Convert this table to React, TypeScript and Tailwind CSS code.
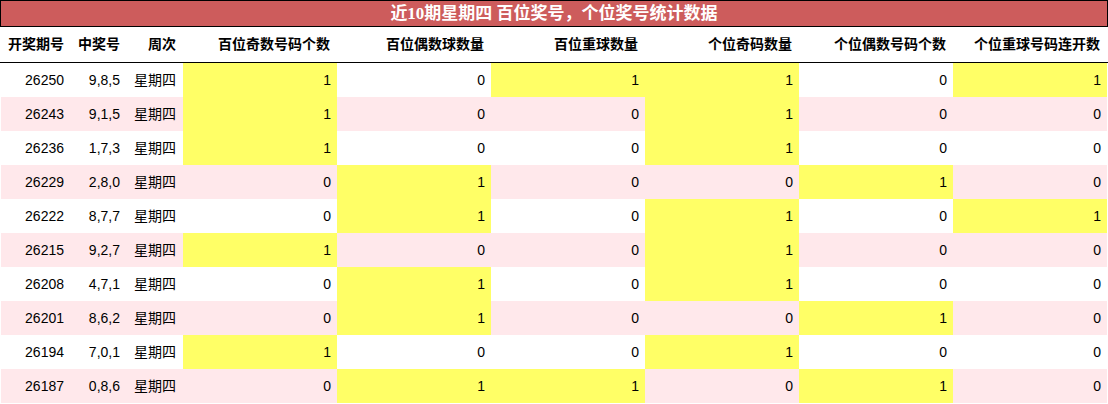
const headers = [
  "开奖期号",
  "中奖号",
  "周次",
  "百位奇数号码个数",
  "百位偶数球数量",
  "百位重球数量",
  "个位奇码数量",
  "个位偶数号码个数",
  "个位重球号码连开数",
];

const rows: [string, string, number[]][] = [
  ["26250", "9,8,5", [1, 0, 1, 1, 0, 1]],
  ["26243", "9,1,5", [1, 0, 0, 1, 0, 0]],
  ["26236", "1,7,3", [1, 0, 0, 1, 0, 0]],
  ["26229", "2,8,0", [0, 1, 0, 0, 1, 0]],
  ["26222", "8,7,7", [0, 1, 0, 1, 0, 1]],
  ["26215", "9,2,7", [1, 0, 0, 1, 0, 0]],
  ["26208", "4,7,1", [0, 1, 0, 1, 0, 0]],
  ["26201", "8,6,2", [0, 1, 0, 0, 1, 0]],
  ["26194", "7,0,1", [1, 0, 0, 1, 0, 0]],
  ["26187", "0,8,6", [0, 1, 1, 0, 1, 0]],
];

const grid = "grid grid-cols-[70px_56px_56px_repeat(6,154px)]";

export default function App() {
  return (
    <div
      className="w-[1108px] h-[404px] bg-white text-[14px] text-black overflow-hidden"
      style={{ fontFamily: '"Liberation Sans", "Noto Sans CJK SC", sans-serif' }}
    >
      {/* Title */}
      <div
        className="h-[27px] border border-black bg-[#cd5c5c] flex items-center justify-center text-white font-bold text-[17px] leading-none"
        style={{ fontFamily: '"Liberation Serif", "Noto Sans CJK SC", serif' }}
      >
        近10期星期四 百位奖号，个位奖号统计数据
      </div>

      {/* Header */}
      <div className="border-b border-black px-[1px]">
        <div className={`${grid} h-[35px]`}>
          {headers.map((h) => (
            <div key={h} className="flex items-center justify-end pr-[7px] font-bold">
              {h}
            </div>
          ))}
        </div>
      </div>

      {/* Data rows */}
      <div className="px-[1px]">
        {rows.map(([issue, nums, stats], i) => {
          const rowBg = i % 2 === 1 ? "bg-[#ffe8eb]" : "bg-white";
          return (
            <div key={issue} className={`${grid} h-[34px] ${rowBg}`}>
              <div className="flex items-center justify-end pr-[7px]">{issue}</div>
              <div className="flex items-center justify-end pr-[7px]">{nums}</div>
              <div className="flex items-center justify-end pr-[7px]">星期四</div>
              {stats.map((v, j) => (
                <div
                  key={j}
                  className={`flex items-center justify-end pr-[6px] ${v === 1 ? "bg-[#ffff66]" : ""}`}
                >
                  {v}
                </div>
              ))}
            </div>
          );
        })}
      </div>
    </div>
  );
}
